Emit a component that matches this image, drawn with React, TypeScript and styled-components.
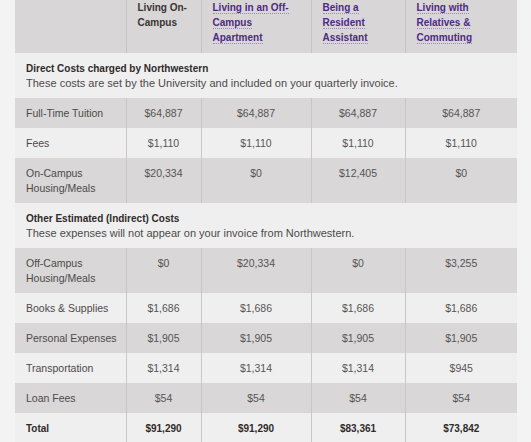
import styled, { createGlobalStyle } from "styled-components";

const GlobalStyle = createGlobalStyle`
  body {
    margin: 0;
    background: #f3f3f3;
    font-family: "Liberation Sans", Arial, sans-serif;
  }
`;

const Page = styled.div`
  padding: 0 14px 0 15px;
  margin-top: -8px;
`;

const Table = styled.table`
  width: 502px;
  border-collapse: collapse;
  table-layout: fixed;
  font-size: 10.5px;
  line-height: 15px;
  color: #555;
`;

const HeadCell = styled.th<{ link?: boolean }>`
  background: #d8d6d6;
  text-align: left;
  vertical-align: top;
  padding: 8px 6px 8px 11px;
  font-size: 10px;
  font-weight: bold;
  color: ${({ link }) => (link ? "#4e2a84" : "#3a3434")};
  border-left: 1px solid #c6c3c3;

  &:first-child {
    border-left: none;
  }
`;

const HeadLink = styled.span`
  border-bottom: 1px dotted #9b88bb;
`;

const Row = styled.tr<{ shade?: boolean }>`
  background: ${({ shade }) => (shade ? "#d9d7d7" : "#f0efef")};
`;

const Label = styled.td<{ bold?: boolean }>`
  padding: 8px 4px 7px 11px;
  vertical-align: top;
  color: ${({ bold }) => (bold ? "#2f2b2a" : "#4d4a4a")};
  font-weight: ${({ bold }) => (bold ? "bold" : "normal")};
  font-size: ${({ bold }) => (bold ? "10px" : "10.5px")};
`;

const Value = styled.td<{ bold?: boolean }>`
  padding: 8px 6px 7px 6px;
  vertical-align: top;
  text-align: center;
  border-left: 1px solid #c9c6c6;
  color: ${({ bold }) => (bold ? "#2f2b2a" : "#555")};
  font-weight: ${({ bold }) => (bold ? "bold" : "normal")};
  font-size: ${({ bold }) => (bold ? "10px" : "10.5px")};
`;

const SectionCell = styled.td`
  background: #efefef;
  padding: 8px 11px 7px 11px;
  color: #4d4a4a;
  font-size: 11px;
`;

const SectionTitle = styled.div`
  font-size: 10px;
  font-weight: bold;
  color: #2f2b2a;
`;

const headTitles = [
  { link: false, lines: ["Living On-", "Campus"] },
  { link: true, lines: ["Living in an Off-", "Campus", "Apartment"] },
  { link: true, lines: ["Being a", "Resident", "Assistant"] },
  { link: true, lines: ["Living with", "Relatives &", "Commuting"] },
];

type Line = { label: string; values: string[] };

const direct: Line[] = [
  { label: "Full-Time Tuition", values: ["$64,887", "$64,887", "$64,887", "$64,887"] },
  { label: "Fees", values: ["$1,110", "$1,110", "$1,110", "$1,110"] },
  { label: "On-Campus Housing/Meals", values: ["$20,334", "$0", "$12,405", "$0"] },
];

const indirect: Line[] = [
  { label: "Off-Campus Housing/Meals", values: ["$0", "$20,334", "$0", "$3,255"] },
  { label: "Books & Supplies", values: ["$1,686", "$1,686", "$1,686", "$1,686"] },
  { label: "Personal Expenses", values: ["$1,905", "$1,905", "$1,905", "$1,905"] },
  { label: "Transportation", values: ["$1,314", "$1,314", "$1,314", "$945"] },
  { label: "Loan Fees", values: ["$54", "$54", "$54", "$54"] },
];

const totals = ["$91,290", "$91,290", "$83,361", "$73,842"];

function CostRows({ lines }: { lines: Line[] }) {
  return (
    <>
      {lines.map((line, i) => (
        <Row key={line.label} shade={i % 2 === 0}>
          <Label>{line.label}</Label>
          {line.values.map((v, j) => (
            <Value key={j}>{v}</Value>
          ))}
        </Row>
      ))}
    </>
  );
}

export default function App() {
  return (
    <>
      <GlobalStyle />
      <Page>
        <Table>
          <colgroup>
            <col style={{ width: 111 }} />
            <col style={{ width: 75 }} />
            <col style={{ width: 110 }} />
            <col style={{ width: 94 }} />
            <col style={{ width: 112 }} />
          </colgroup>
          <thead>
            <tr>
              <HeadCell />
              {headTitles.map((c, i) => (
                <HeadCell key={i} link={c.link}>
                  {c.lines.map((part, k) => (
                    <div key={k}>{c.link ? <HeadLink>{part}</HeadLink> : part}</div>
                  ))}
                </HeadCell>
              ))}
            </tr>
          </thead>
          <tbody>
            <tr>
              <SectionCell colSpan={5}>
                <SectionTitle>Direct Costs charged by Northwestern</SectionTitle>
                These costs are set by the University and included on your quarterly invoice.
              </SectionCell>
            </tr>
            <CostRows lines={direct} />
            <tr>
              <SectionCell colSpan={5}>
                <SectionTitle>Other Estimated (Indirect) Costs</SectionTitle>
                These expenses will not appear on your invoice from Northwestern.
              </SectionCell>
            </tr>
            <CostRows lines={indirect} />
            <Row>
              <Label bold>Total</Label>
              {totals.map((t, j) => (
                <Value key={j} bold>
                  {t}
                </Value>
              ))}
            </Row>
          </tbody>
        </Table>
      </Page>
    </>
  );
}
